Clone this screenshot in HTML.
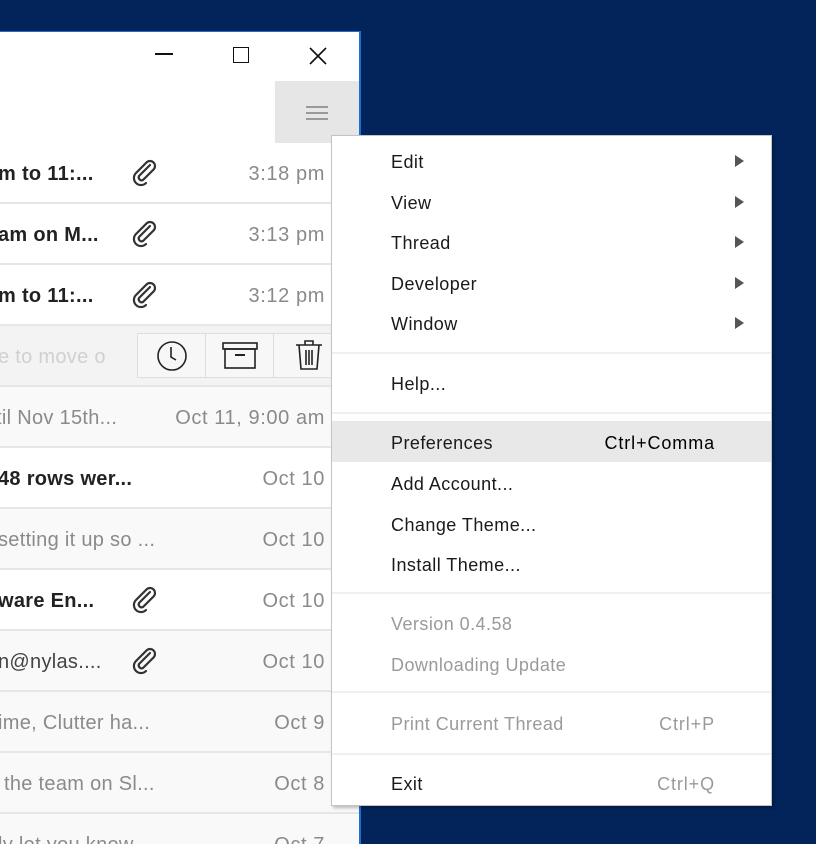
<!DOCTYPE html>
<html><head><meta charset="utf-8"><style>
*{margin:0;padding:0;box-sizing:border-box}
html,body{width:816px;height:844px;overflow:hidden}
body{background:#02245a;position:relative;font-family:"Liberation Sans",sans-serif}
.win{position:absolute;left:-2px;top:31px;width:363px;height:813px;background:#fff;border-right:2px solid #1e6fd0;border-top:1px solid #1e6fd0}
.t{position:absolute;white-space:nowrap}
.row{position:absolute;left:0;width:359px;height:61px;border-bottom:2px solid #e6e6e6}
.row .s{position:absolute;top:20px;font-size:20px;white-space:nowrap;letter-spacing:0.3px}
.row .d{position:absolute;right:34px;top:20px;font-size:20px;color:#8a8a8a;white-space:nowrap;letter-spacing:0.6px}
.b{font-weight:bold;color:#222}
.g{color:#8a8a8a}
.clip{position:absolute;left:131px;top:16px}
.menu{position:absolute;left:331px;top:135px;width:441px;height:671px;background:#fff;border:1px solid #c4c4c4;box-shadow:2px 2px 3px rgba(0,0,0,.25)}
.mi{position:absolute;left:59px;font-size:18px;color:#1a1a1a;white-space:nowrap;height:24px;line-height:24px;letter-spacing:0.45px}
.dis{color:#9a9a9a}
.sc{position:absolute;right:56px;font-size:18px;white-space:nowrap;line-height:24px;letter-spacing:0.9px}
.arr{position:absolute;left:403px;width:0;height:0;border-left:9px solid #555;border-top:6px solid transparent;border-bottom:6px solid transparent}
.sep{position:absolute;left:0;width:439px;height:2px;background:#f0f0f0}
</style></head><body>
<div class="win">
  <div class="t" style="left:157px;top:21px;width:18px;height:2px;background:#111"></div>
  <div class="t" style="left:235px;top:15px;width:16px;height:16px;border:1.5px solid #111"></div>
  <svg class="t" style="left:311px;top:15px" width="18" height="18"><path d="M1 1L17 17M17 1L1 17" stroke="#111" stroke-width="1.6"/></svg>
  <div class="t" style="left:277px;top:49px;width:84px;height:62px;background:#e6e6e6"></div>
  <div class="t" style="left:308px;top:74px;width:22px;height:2px;background:#999;box-shadow:0 6px 0 #999,0 12px 0 #999"></div>
  <div style="position:absolute;left:0;top:111px;width:361px;height:2px;background:#dadada"></div>
</div>
<svg width="0" height="0" style="position:absolute"><defs><symbol id="cl" viewBox="0 0 28 28"><path d="M20 8 L9 19 a3 3 0 0 0 4 4 L24 12 a5 5 0 0 0 -7 -7 L6 16 a7 7 0 0 0 10 10" fill="none" stroke="#333" stroke-width="2.2" stroke-linecap="round" transform="translate(-1,-2)"/></symbol></defs></svg>
<div class="row" style="top:143px;background:#fff"><span class="s b" style="left:-2px">m to 11:...</span><svg class="clip" width="28" height="28"><use href="#cl"/></svg><span class="d">3:18 pm</span></div>
<div class="row" style="top:204px;background:#fff"><span class="s b" style="left:-2px">am on M...</span><svg class="clip" width="28" height="28"><use href="#cl"/></svg><span class="d">3:13 pm</span></div>
<div class="row" style="top:265px;background:#fff"><span class="s b" style="left:-2px">m to 11:...</span><svg class="clip" width="28" height="28"><use href="#cl"/></svg><span class="d">3:12 pm</span></div>
<div class="row" style="top:326px;background:#f3f3f3"><span class="s" style="left:-2px;color:#d0d0d0">e to move o</span>
  <div style="position:absolute;left:137px;top:7px;width:224px;height:45px;background:#f7f7f7;border:1px solid #ddd"></div>
  <div style="position:absolute;left:205px;top:8px;width:1px;height:43px;background:#ddd"></div>
  <div style="position:absolute;left:273px;top:8px;width:1px;height:43px;background:#ddd"></div>
  <svg style="position:absolute;left:156px;top:14px" width="32" height="32"><circle cx="16" cy="16" r="14" fill="none" stroke="#222" stroke-width="1.6"/><path d="M15 7V17L20 20" fill="none" stroke="#222" stroke-width="1.6"/></svg>
  <svg style="position:absolute;left:222px;top:16px" width="36" height="28"><rect x="1" y="1" width="34" height="6" fill="none" stroke="#222" stroke-width="1.6"/><rect x="3" y="7" width="30" height="19" fill="none" stroke="#222" stroke-width="1.6"/><path d="M13 13H23" stroke="#222" stroke-width="2"/></svg>
  <svg style="position:absolute;left:294px;top:13px" width="30" height="32"><path d="M2 6H28M11 6V2H19V6M5 6L7 30H23L25 6M12 11V26M15 11V26M18 11V26" fill="none" stroke="#222" stroke-width="1.6"/></svg>
</div>
<div class="row" style="top:387px;background:#f9f9f9"><span class="s g" style="left:-4px">til Nov 15th...</span><span class="d">Oct 11, 9:00 am</span></div>
<div class="row" style="top:448px;background:#fff"><span class="s b" style="left:-2px">48 rows wer...</span><span class="d">Oct 10</span></div>
<div class="row" style="top:509px;background:#f9f9f9"><span class="s g" style="left:-2px">setting it up so ...</span><span class="d">Oct 10</span></div>
<div class="row" style="top:570px;background:#fff"><span class="s b" style="left:-2px">ware En...</span><svg class="clip" width="28" height="28"><use href="#cl"/></svg><span class="d">Oct 10</span></div>
<div class="row" style="top:631px;background:#f9f9f9"><span class="s g" style="left:-2px;color:#444">n@nylas....</span><svg class="clip" width="28" height="28"><use href="#cl"/></svg><span class="d">Oct 10</span></div>
<div class="row" style="top:692px;background:#f9f9f9"><span class="s g" style="left:-2px">ime, Clutter ha...</span><span class="d">Oct 9</span></div>
<div class="row" style="top:753px;background:#f9f9f9"><span class="s g" style="left:4px">the team on Sl...</span><span class="d">Oct 8</span></div>
<div class="row" style="top:814px;background:#f9f9f9"><span class="s g" style="left:-2px">ly let you know</span><span class="d">Oct 7</span></div>
<div style="position:absolute;left:359px;top:31px;width:2px;height:813px;background:#1e6fd0"></div>

<div class="menu">
  <div class="mi" style="top:14px">Edit</div><div class="arr" style="top:19px"></div>
  <div class="mi" style="top:55px">View</div><div class="arr" style="top:60px"></div>
  <div class="mi" style="top:95px">Thread</div><div class="arr" style="top:100px"></div>
  <div class="mi" style="top:136px">Developer</div><div class="arr" style="top:141px"></div>
  <div class="mi" style="top:176px">Window</div><div class="arr" style="top:181px"></div>
  <div class="sep" style="top:216px"></div>
  <div class="mi" style="top:236px">Help...</div>
  <div class="sep" style="top:276px"></div>
  <div style="position:absolute;left:0;top:285px;width:439px;height:41px;background:#e8e8e8"></div>
  <div class="mi" style="top:295px">Preferences</div><div class="sc" style="top:295px">Ctrl+Comma</div>
  <div class="mi" style="top:336px">Add Account...</div>
  <div class="mi" style="top:377px">Change Theme...</div>
  <div class="mi" style="top:417px">Install Theme...</div>
  <div class="sep" style="top:456px"></div>
  <div class="mi dis" style="top:476px">Version 0.4.58</div>
  <div class="mi dis" style="top:517px">Downloading Update</div>
  <div class="sep" style="top:555px"></div>
  <div class="mi dis" style="top:576px">Print Current Thread</div><div class="sc dis" style="top:576px">Ctrl+P</div>
  <div class="sep" style="top:617px"></div>
  <div class="mi" style="top:636px">Exit</div><div class="sc dis" style="top:636px">Ctrl+Q</div>
</div>
</body></html>
